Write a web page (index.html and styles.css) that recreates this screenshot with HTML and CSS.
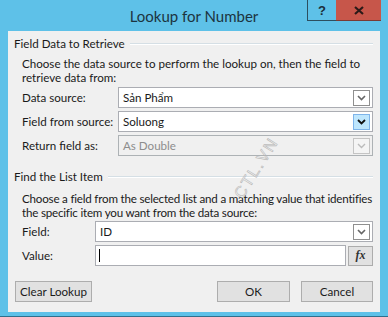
FILE: index.html
```html
<!DOCTYPE html>
<html lang="en">
<head>
<meta charset="UTF-8">
<title>Lookup for Number</title>
<link rel="stylesheet" href="styles.css">
</head>
<body>

<div class="window">
  <div class="titlebar">
    <span></span>
    <h1 class="title">Lookup for Number</h1>
    <div class="controls">
      <button class="help-btn">?</button>
      <button class="close-btn">
        <svg width="10" height="9" viewBox="0 0 10 9"><path d="M1 1 L9 8 M9 1 L1 8" stroke="#2b1a18" stroke-width="2.2"/></svg>
      </button>
    </div>
  </div>

  <div class="dialog">
    <div class="group-head"><span>Field Data to Retrieve</span><i class="rule"></i></div>
    <div class="group-body">
      <p class="hint">Choose the data source to perform the lookup on, then the field to<br>retrieve data from:</p>
      <div class="row">
        <label>Data source:</label>
        <div class="combo"><span>Sản Phẩm</span>
          <b class="drop"><svg width="9" height="6" viewBox="0 0 9 6"><path d="M1 1 L4.5 4.5 L8 1" fill="none" stroke="#666" stroke-width="1.6"/></svg></b>
        </div>
      </div>
      <div class="row">
        <label>Field from source:</label>
        <div class="combo"><span>Soluong</span>
          <b class="drop hot"><svg width="9" height="6" viewBox="0 0 9 6"><path d="M1 1 L4.5 4.5 L8 1" fill="none" stroke="#111" stroke-width="1.8"/></svg></b>
        </div>
      </div>
      <div class="row">
        <label>Return field as:</label>
        <div class="combo disabled"><span>As Double</span>
          <b class="drop"><svg width="9" height="6" viewBox="0 0 9 6"><path d="M1 1 L4.5 4.5 L8 1" fill="none" stroke="#bbb" stroke-width="1.4"/></svg></b>
        </div>
      </div>
    </div>

    <div class="group-head second"><span>Find the List Item</span><i class="rule"></i></div>
    <div class="group-body">
      <p class="hint hint-2">Choose a field from the selected list and a matching value that identifies<br>the specific item you want from the data source:</p>
      <div class="row short">
        <label>Field:</label>
        <div class="combo"><span>ID</span>
          <b class="drop"><svg width="9" height="6" viewBox="0 0 9 6"><path d="M1 1 L4.5 4.5 L8 1" fill="none" stroke="#666" stroke-width="1.6"/></svg></b>
        </div>
      </div>
      <div class="row short">
        <label>Value:</label>
        <div class="value-wrap">
          <div class="textbox"><i class="caret"></i></div>
          <button class="fx-btn"><em>fx</em></button>
        </div>
      </div>
    </div>

    <div class="buttons">
      <button class="btn clear">Clear Lookup</button>
      <span class="spacer"></span>
      <button class="btn ok">OK</button>
      <button class="btn cancel">Cancel</button>
    </div>

    <div class="watermark">CTL.VN</div>
  </div>
</div>

</body>
</html>
```

FILE: styles.css
```css
body {
  margin: 0;
  padding: 0;
  font-family: Lato, "Open Sans", sans-serif;
  font-size: 11.6px;
  color: #1a1a1a;
  background: #fff;
}

.window {
  width: 388px;
  height: 317px;
  box-sizing: border-box;
  background-color: #5ec1e8;
  border-bottom: 1px solid #2f6f8c;
  padding: 0 8px 4px 8px;
  display: flex;
  flex-direction: column;
}

.titlebar {
  height: 31px;
  display: grid;
  grid-template-columns: 1fr auto 1fr;
  margin: 0 -8px;
}

.title {
  margin: 0;
  font-size: 15px;
  font-weight: normal;
  color: #1c3440;
  line-height: 31px;
  padding-top: 1px;
  white-space: nowrap;
}

.controls {
  justify-self: end;
  display: flex;
  height: 21px;
  margin-right: 7px;
}

.controls button {
  border: none;
  padding: 0;
  margin: 0;
  height: 21px;
  display: flex;
  align-items: center;
  justify-content: center;
}

.help-btn {
  width: 29px;
  background-color: #5ec1e8;
  border-left: 1px solid #2c4f60 !important;
  border-bottom: 1px solid #2c4f60 !important;
  box-sizing: border-box;
  font-family: "Liberation Sans", sans-serif;
  font-weight: bold;
  font-size: 13px;
  color: #1c2e38;
}

.close-btn {
  width: 45px;
  background-color: #c7564a;
  border-bottom: 1px solid #7a3a33 !important;
  box-sizing: border-box;
}

.dialog {
  flex: 1;
  background-color: #f0f0f0;
  padding: 6px 7px 0 6px;
  position: relative;
  overflow: hidden;
}

.group-head {
  display: flex;
  align-items: center;
  height: 14px;
  line-height: 14px;
  white-space: nowrap;
}

.group-head span {
  padding-right: 5px;
}

.group-head .rule {
  flex: 1;
  height: 0;
  border-top: 1px solid #d5dfe5;
  border-bottom: 1px solid #fff;
}

.group-head.second {
  margin-top: 14px;
}

.group-body {
  padding-left: 8px;
}

.hint {
  margin: 6px 0 2px 0;
  line-height: 14px;
  white-space: nowrap;
}

.hint-2 {
  margin-top: 8px;
  margin-bottom: 1px;
  letter-spacing: -0.2px;
}

.row {
  display: flex;
  align-items: center;
  height: 21px;
  margin-bottom: 3px;
}

.row label {
  width: 96px;
  flex-shrink: 0;
  white-space: nowrap;
}

.row.short label {
  width: 73px;
}

.combo {
  flex: 1;
  height: 21px;
  box-sizing: border-box;
  border: 1px solid #abadb3;
  background-color: #fff;
  display: flex;
  align-items: center;
  padding: 0 2px 0 4px;
}

.combo span {
  flex: 1;
}

.combo.disabled {
  background-color: #f0f0f0;
  border-color: #adb2b5;
  color: #8d8d8d;
}

.drop {
  width: 17px;
  height: 16px;
  box-sizing: border-box;
  border: 1px solid #8f8f8f;
  background-color: #fff;
  display: flex;
  align-items: center;
  justify-content: center;
}

.drop.hot {
  background-color: #bee6fd;
  border-color: #7eb4ea;
}

.combo.disabled .drop {
  border-color: #c4c4c4;
  background-color: #f4f4f4;
}

.value-wrap {
  flex: 1;
  display: flex;
  gap: 2px;
  align-items: center;
}

.textbox {
  flex: 1;
  height: 21px;
  box-sizing: border-box;
  border: 1px solid #abadb3;
  background-color: #fff;
  padding: 3px 0 0 3px;
}

.caret {
  display: block;
  width: 1px;
  height: 13px;
  background-color: #000;
}

.fx-btn {
  width: 25px;
  height: 20px;
  border: 1px solid #acacac;
  background-color: #e1e1e1;
  padding: 0;
  font-family: "Liberation Serif", serif;
  font-size: 12px;
  font-weight: bold;
  color: #333;
}

.buttons {
  display: flex;
  gap: 11px;
  margin-top: 15px;
  padding-left: 1px;
}

.spacer {
  flex: 1;
}

.btn {
  height: 21px;
  border: 1px solid #adadad;
  background-color: #e1e1e1;
  font-family: Lato, "Open Sans", sans-serif;
  font-size: 11.6px;
  color: #1a1a1a;
  padding: 0;
  white-space: nowrap;
}

.btn.clear {
  width: 77px;
}

.btn.ok {
  width: 73px;
}

.btn.cancel {
  width: 72px;
}

.watermark {
  position: absolute;
  left: 214px;
  top: 128px;
  transform: rotate(-58deg);
  font-family: "Liberation Sans", sans-serif;
  font-size: 16px;
  letter-spacing: 2px;
  color: transparent;
  -webkit-text-stroke: 0.6px #b8b8b8;
}
```
